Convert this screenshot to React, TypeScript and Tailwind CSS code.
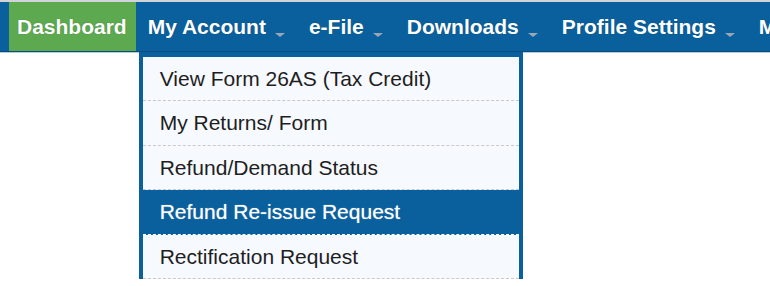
import React from "react";

const NAV = [
  { label: "My Account", open: true },
  { label: "e-File" },
  { label: "Downloads" },
  { label: "Profile Settings" },
  { label: "My Profile" },
];

const MENU = [
  { label: "View Form 26AS (Tax Credit)", h: "h-[44px]" },
  { label: "My Returns/ Form", h: "h-[45px]" },
  { label: "Refund/Demand Status", h: "h-[44px]" },
  { label: "Refund Re-issue Request", h: "h-[45px]", active: true },
  { label: "Rectification Request", h: "h-[44px]" },
];

function Caret() {
  return (
    <svg width="10" height="4" viewBox="0 0 10 4" className="ml-[9px] mt-[16px] shrink-0">
      <path d="M0 0 H10 L5 4 Z" fill="#9aa7b9" />
    </svg>
  );
}

function Dropdown() {
  return (
    <div className="absolute left-[3px] top-[50px] w-[384px] bg-[#f6f9fe] border-x-[4px] border-t-[5px] border-[#0a609c] z-10 font-normal [text-shadow:none]">
      {MENU.map((m) => (
        <div
          key={m.label}
          className={`${m.h} flex items-center pl-[17px] text-[21px] border-b border-dashed ${
            m.active
              ? "bg-[#0a609c] text-white border-white [text-shadow:0_0_1px_rgba(255,255,255,0.6)]"
              : "text-[#1e1e1e] border-[#c9c9c9]"
          }`}
        >
          {m.label}
        </div>
      ))}
    </div>
  );
}

export default function App() {
  return (
    <div className="w-[770px] h-[286px] bg-white overflow-hidden font-['Liberation_Sans',Arial,sans-serif]">
      <div className="h-[2px] bg-[#cfd4d8]" />
      <div className="h-[50px] bg-[#0a609c] border-b border-[#0a4c7e] flex pl-[9px] whitespace-nowrap">
        <div className="bg-[#5ca94f] flex items-center pl-[8px] pr-[9px] text-white font-bold text-[21px] [text-shadow:0_0_1px_rgba(0,0,0,0.3)]">
          Dashboard
        </div>
        {NAV.map((n) => (
          <div key={n.label} className="relative flex items-center px-[12px] text-white font-bold text-[21px] [text-shadow:0_0_1px_rgba(0,0,0,0.3)]">
            <span>{n.label}</span>
            <Caret />
            {n.open && <Dropdown />}
          </div>
        ))}
      </div>
      <div className="h-[1px] bg-[#b3cbe0]" />
    </div>
  );
}
